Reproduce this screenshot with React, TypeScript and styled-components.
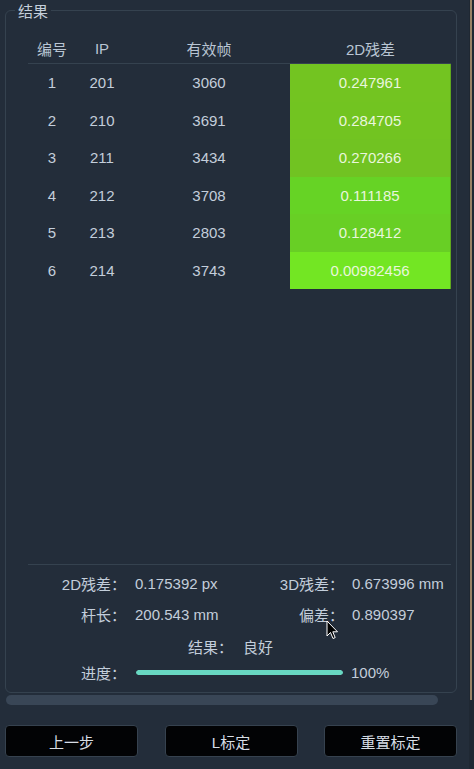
import styled, { createGlobalStyle } from "styled-components";

const GlobalStyle = createGlobalStyle`
  html, body {
    margin: 0;
    padding: 0;
    background: #232d3a;
  }
  body {
    font-family: "Liberation Sans", "Noto Sans CJK SC", sans-serif;
    font-size: 15px;
    color: #c3cedb;
  }
`;

type Row = { no: number; ip: number; frames: number; residual: string; color: string };

const rows: Row[] = [
  { no: 1, ip: 201, frames: 3060, residual: "0.247961", color: "#73c421" },
  { no: 2, ip: 210, frames: 3691, residual: "0.284705", color: "#72c421" },
  { no: 3, ip: 211, frames: 3434, residual: "0.270266", color: "#71c322" },
  { no: 4, ip: 212, frames: 3708, residual: "0.111185", color: "#66d325" },
  { no: 5, ip: 213, frames: 2803, residual: "0.128412", color: "#68cf25" },
  { no: 6, ip: 214, frames: 3743, residual: "0.00982456", color: "#73e623" },
];

const App = () => {
  return (
    <>
      <GlobalStyle />
      <Shell>
        <Main>
          <GroupBox>
            <GroupTitle>结果</GroupTitle>

            {/* 表格 */}
            <Table>
              <HeaderRow>
                <HeadCell>编号</HeadCell>
                <HeadCell>IP</HeadCell>
                <HeadCell>有效帧</HeadCell>
                <HeadCell>2D残差</HeadCell>
              </HeaderRow>
              {rows.map((r) => (
                <DataRow key={r.no}>
                  <Cell>{r.no}</Cell>
                  <Cell>{r.ip}</Cell>
                  <Cell>{r.frames}</Cell>
                  <ResidualCell $bg={r.color}>{r.residual}</ResidualCell>
                </DataRow>
              ))}
            </Table>

            <Spacer />

            {/* 统计 */}
            <Summary>
              <StatRow $h={30}>
                <Label>2D残差：</Label>
                <Value>0.175392 px</Value>
                <Label2>3D残差：</Label2>
                <Value2>0.673996 mm</Value2>
              </StatRow>
              <StatRow $h={32}>
                <Label>杆长：</Label>
                <Value>200.543 mm</Value>
                <Label2>偏差：</Label2>
                <Value2>0.890397</Value2>
              </StatRow>
              <ResultRow>
                <span>结果：</span>
                <span>良好</span>
              </ResultRow>
              <StatRow $h={20}>
                <Label>进度：</Label>
                <ProgressTrack>
                  <ProgressFill style={{ width: "100%" }} />
                </ProgressTrack>
                <Value2>100%</Value2>
              </StatRow>
            </Summary>
          </GroupBox>

          <HScroll />

          <ButtonBar>
            <ActionButton>上一步</ActionButton>
            <ActionButton>L标定</ActionButton>
            <ActionButton>重置标定</ActionButton>
          </ButtonBar>
        </Main>
        <Edge />
      </Shell>

      <Cursor width="13" height="20" viewBox="0 0 13 20">
        <path
          d="M1 1 L1 16 L4.5 12.5 L7 18.5 L9.2 17.6 L6.8 11.8 L11.5 11.8 Z"
          fill="#000"
          stroke="#fff"
          strokeWidth="1"
          strokeLinejoin="round"
        />
      </Cursor>
    </>
  );
};

const Shell = styled.div`
  display: flex;
  width: 474px;
  height: 769px;
  overflow: hidden;
`;

const Main = styled.div`
  width: 469px;
  display: flex;
  flex-direction: column;
  padding: 10px 0 0 5px;
  box-sizing: border-box;
`;

const Edge = styled.div`
  width: 5px;
  flex-shrink: 0;
  background: #1f2833;

  &::before {
    content: "";
    display: block;
    width: 2px;
    height: 700px;
    margin-left: 1px;
    background: #9a8266;
  }
`;

/* =========================
   分组框
   ========================= */

const GroupBox = styled.div`
  position: relative;
  width: 452px;
  height: 683px;
  box-sizing: border-box;
  border: 1px solid #35424f;
  border-radius: 6px;
  display: flex;
  flex-direction: column;
  padding: 22px 5px 10px 22px;
`;

const GroupTitle = styled.div`
  position: absolute;
  top: -9px;
  left: 9px;
  padding: 0 3px;
  background: #232d3a;
  font-size: 15px;
  line-height: 18px;
  color: #c5cfdb;
  font-family: "Noto Sans CJK SC", sans-serif;
`;

const Table = styled.div`
  display: flex;
  flex-direction: column;
`;

const columns = "48px 52px 162px 161px";

const HeaderRow = styled.div`
  display: grid;
  grid-template-columns: ${columns};
  height: 30px;
  align-items: center;
  border-bottom: 1px solid #35424f;
`;

const HeadCell = styled.div`
  text-align: center;
  color: #b9c5d3;
`;

const DataRow = styled.div`
  display: grid;
  grid-template-columns: ${columns};
  height: 37.5px;
`;

const Cell = styled.div`
  display: flex;
  align-items: center;
  justify-content: center;
  color: #c3cedb;
`;

const ResidualCell = styled(Cell)<{ $bg: string }>`
  background: ${({ $bg }) => $bg};
  color: #e9f6dc;
  border-right: 1px solid #5fa81d;
`;

const Spacer = styled.div`
  flex: 1;
`;

/* =========================
   统计区域
   ========================= */

const Summary = styled.div`
  border-top: 1px solid #35424f;
  padding-top: 3px;
  display: flex;
  flex-direction: column;
`;

const StatRow = styled.div<{ $h: number }>`
  display: flex;
  align-items: center;
  height: ${({ $h }) => $h}px;
`;

const Label = styled.span`
  width: 98px;
  text-align: right;
  white-space: nowrap;
  flex-shrink: 0;
`;

const Value = styled.span`
  width: 130px;
  margin-left: 9px;
  white-space: nowrap;
`;

const Label2 = styled.span`
  width: 79px;
  text-align: right;
  white-space: nowrap;
`;

const Value2 = styled.span`
  margin-left: 8px;
  white-space: nowrap;
`;

const ResultRow = styled.div`
  display: flex;
  justify-content: center;
  align-items: center;
  gap: 10px;
  height: 32px;
  padding-right: 18px;
`;

const ProgressTrack = styled.div`
  width: 207px;
  height: 5px;
  margin-left: 10px;
  border-radius: 3px;
  background: #2e3a47;
  overflow: hidden;
`;

const ProgressFill = styled.div`
  height: 100%;
  border-radius: 3px;
  background: #68d8c2;
`;

const HScroll = styled.div`
  width: 432px;
  height: 10px;
  margin: 2px 0 0 1px;
  border-radius: 5px;
  background: #394656;
`;

/* =========================
   按钮
   ========================= */

const ButtonBar = styled.div`
  display: flex;
  justify-content: space-between;
  width: 452px;
  margin-top: 20px;
`;

const ActionButton = styled.button`
  width: 133px;
  height: 32px;
  background: #020305;
  border: 1px solid #36424f;
  border-radius: 4px;
  color: #d7dde6;
  font-size: 15px;
  font-family: "Liberation Sans", "Noto Sans CJK SC", sans-serif;
  cursor: pointer;
`;

const Cursor = styled.svg`
  position: absolute;
  left: 326px;
  top: 620px;
  pointer-events: none;
`;

export default App;
